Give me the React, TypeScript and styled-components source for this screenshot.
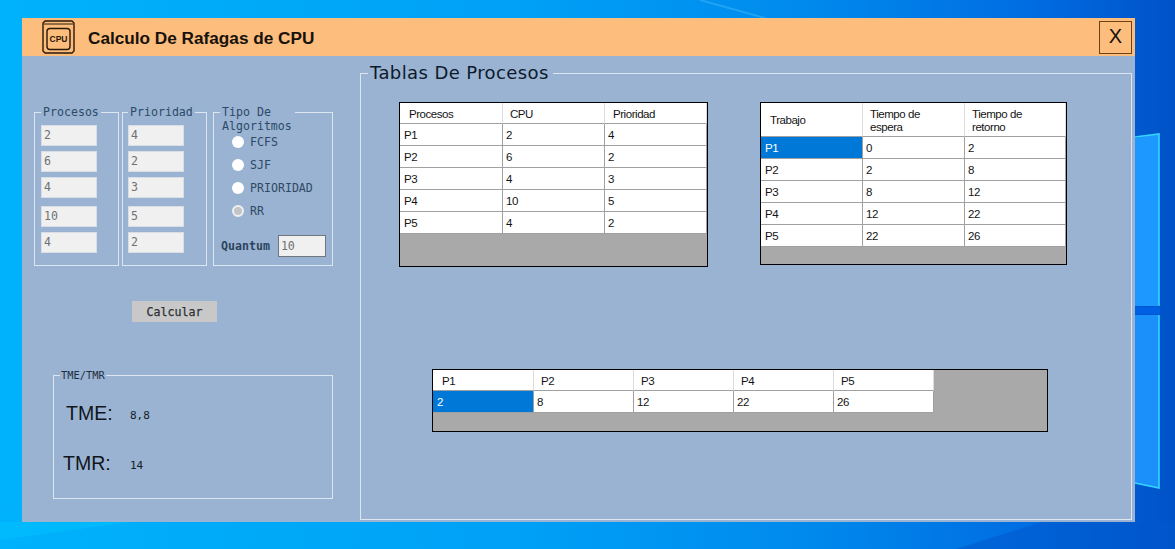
import React from "react";
import styled, { createGlobalStyle } from "styled-components";

const Global = createGlobalStyle`
  html, body { margin: 0; padding: 0; }
  body { font-family: "DejaVu Sans Mono", monospace; overflow: hidden; }
`;

const Desktop = styled.div`
  position: relative;
  width: 1175px;
  height: 549px;
  box-sizing: border-box;
  padding: 18px 40px 27px 22px;
  overflow: hidden;
  background: linear-gradient(90deg, #00b2fb 0%, #00a0f6 45%, #0088ec 70%, #006ce2 88%, #0052c8 100%);
`;

const Wallpaper = styled.svg`
  position: absolute;
  left: 0;
  top: 0;
`;

const Window = styled.div`
  position: relative;
  width: 1113px;
  height: 504px;
  display: flex;
  flex-direction: column;
  background: #9ab3d2;
`;

const TitleBar = styled.header`
  height: 38px;
  display: flex;
  align-items: center;
  padding: 0 3px 0 20px;
  background: #fdbd7c;
`;

const AppIcon = styled.svg`
  flex: none;
`;

const Title = styled.h1`
  flex: 1;
  margin: 0 0 0 13px;
  padding-top: 2px;
  font: bold 17.2px "Liberation Sans", Arial, sans-serif;
  color: #17120c;
`;

const CloseButton = styled.button`
  width: 33px;
  height: 33px;
  padding: 0 0 1px;
  border: 1px solid #6e4214;
  background: transparent;
  color: #14100c;
  font: 20px "Liberation Sans", Arial, sans-serif;
`;

const Content = styled.main`
  flex: 1;
  display: flex;
  min-height: 0;
`;

const LeftColumn = styled.section`
  width: 338px;
  flex: none;
  box-sizing: border-box;
  padding: 49px 0 0 12px;
`;

const GroupsRow = styled.div`
  display: flex;
  height: 161px;
`;

const Group = styled.fieldset<{ $width: number; $pad?: number; $left?: number }>`
  box-sizing: border-box;
  width: ${(p) => p.$width}px;
  min-width: 0;
  height: 100%;
  margin: 0 0 0 ${(p) => p.$left ?? 0}px;
  padding: 0 ${(p) => p.$pad ?? 6}px;
  border: 1px solid #dbe6f0;
`;

const GroupLegend = styled.legend<{ $width?: number }>`
  box-sizing: border-box;
  height: 14px;
  ${(p) => (p.$width ? `width: ${p.$width}px;` : "")}
  padding: 0 2px;
  font-size: 11.6px;
  line-height: 14px;
  color: #2c4a68;
`;

const FieldStack = styled.div`
  display: flex;
  flex-direction: column;
  padding-top: 6px;
`;

const Field = styled.div<{ $extra?: boolean }>`
  box-sizing: border-box;
  width: 56px;
  height: 21px;
  margin-top: ${(p) => (p.$extra ? 3 : 0)}px;
  margin-bottom: 5px;
  padding-left: 2px;
  border: 1px solid #d9dee4;
  background: #f0f0f0;
  font-size: 11.6px;
  line-height: 19px;
  color: #6f7173;
`;

const RadioList = styled.div`
  display: flex;
  flex-direction: column;
  padding: 11px 0 0 12px;
`;

const RadioRow = styled.label`
  height: 23px;
  display: flex;
  align-items: center;
  gap: 6px;
  font-size: 11.6px;
  color: #2f4a66;
`;

const RadioDot = styled.span<{ $off?: boolean }>`
  box-sizing: border-box;
  width: 12px;
  height: 12px;
  border-radius: 50%;
  background: ${(p) => (p.$off ? "#c3c5c9" : "#ffffff")};
  border: ${(p) => (p.$off ? "2px solid #eef0f2" : "none")};
`;

const QuantumRow = styled.div`
  display: flex;
  align-items: center;
  margin: 13px 0 0 1px;
`;

const QuantumLabel = styled.span`
  width: 58px;
  font-size: 11.6px;
  font-weight: bold;
  color: #2c4460;
`;

const QuantumField = styled.div`
  box-sizing: border-box;
  width: 49px;
  height: 22px;
  padding-left: 2px;
  border: 1px solid #6f767e;
  background: #f0f0f0;
  font-size: 11.6px;
  line-height: 21px;
  color: #6f7173;
`;

const CalcButton = styled.button`
  display: block;
  width: 85px;
  height: 21px;
  margin: 35px 0 0 98px;
  padding: 0;
  border: none;
  background: #c8c8c8;
  font: 11.6px "DejaVu Sans Mono", monospace;
  -webkit-text-stroke: 0.25px #2c3034;
  color: #2c3034;
`;

const TimesGroup = styled.fieldset`
  box-sizing: border-box;
  width: 280px;
  height: 131px;
  margin: 46px 0 0 19px;
  padding: 0;
  min-width: 0;
  border: 1px solid #dbe6f0;
`;

const TimesLegend = styled.legend`
  height: 14px;
  margin-left: 6px;
  padding: 0 1px;
  font-size: 10.4px;
  line-height: 14px;
  color: #1e2e3e;
`;

const TimeRow = styled.div<{ $indent: number; $top: number }>`
  display: grid;
  grid-template-columns: 76px auto;
  align-items: center;
  height: 26px;
  margin-top: ${(p) => p.$top}px;
  padding-left: ${(p) => p.$indent}px;
`;

const TimeLabel = styled.span<{ $indent: number }>`
  margin-right: ${(p) => -p.$indent}px;
  font: 19.5px "Liberation Sans", Arial, sans-serif;
  color: #10161c;
`;

const TimeValue = styled.span<{ $indent: number }>`
  margin-left: ${(p) => -p.$indent}px;
  padding-top: 5px;
  font-size: 11px;
  color: #141c24;
`;

const TablesGroup = styled.fieldset`
  box-sizing: border-box;
  width: 772px;
  height: 460px;
  margin: 4px 0 0 0;
  padding: 16px 0 0 0;
  min-width: 0;
  border: 1px solid #dbe6f0;
`;

const TablesLegend = styled.legend`
  height: 26px;
  margin-left: 7px;
  padding: 0 4px 0 2px;
  font: 18px "DejaVu Sans", sans-serif;
  letter-spacing: 0.4px;
  line-height: 26px;
  color: #0c1a2a;
`;

const TopTables = styled.div`
  display: flex;
  align-items: flex-start;
  gap: 52px;
  margin-left: 38px;
`;

const Grid = styled.div<{ $w: number; $h: number; $left?: number; $top?: number }>`
  box-sizing: border-box;
  width: ${(p) => p.$w}px;
  height: ${(p) => p.$h}px;
  margin: ${(p) => p.$top ?? 0}px 0 0 ${(p) => p.$left ?? 0}px;
  border: 1px solid #000;
  background: #a9a9a9;
  overflow: hidden;
`;

const DataTable = styled.table`
  table-layout: fixed;
  border-collapse: separate;
  border-spacing: 0;
  font: 11.5px "Liberation Sans", Arial, sans-serif;
  letter-spacing: -0.45px;
  color: #141414;
`;

const HeadCell = styled.th<{ $w: number; $h: number; $pad: number }>`
  box-sizing: border-box;
  width: ${(p) => p.$w}px;
  height: ${(p) => p.$h}px;
  padding: 2px 2px 0 ${(p) => p.$pad}px;
  background: #fff;
  border-right: 1px solid #dcdcdc;
  border-bottom: 1px solid #a0a0a0;
  font-weight: normal;
  text-align: left;
  line-height: 13px;
`;

const BodyCell = styled.td<{ $selected?: boolean }>`
  box-sizing: border-box;
  height: 22px;
  padding: 0 0 0 3px;
  background: ${(p) => (p.$selected ? "#0078d7" : "#fff")};
  color: ${(p) => (p.$selected ? "#fff" : "#141414")};
  border-right: 1px solid #a0a0a0;
  border-bottom: 1px solid #a0a0a0;
  &:first-child {
    padding-left: 4px;
  }
`;

type TableDef = {
  head: React.ReactNode[];
  widths: number[];
  pads: number[];
  headH: number;
  rows: string[][];
  selected?: boolean;
};

const DataGrid = ({ head, widths, pads, headH, rows, selected }: TableDef) => (
  <DataTable>
    <thead>
      <tr>
        {head.map((h, i) => (
          <HeadCell key={i} $w={widths[i]} $h={headH} $pad={pads[i]}>
            {h}
          </HeadCell>
        ))}
      </tr>
    </thead>
    <tbody>
      {rows.map((row, r) => (
        <tr key={r}>
          {row.map((c, i) => (
            <BodyCell key={i} $selected={selected && r === 0 && i === 0}>
              {c}
            </BodyCell>
          ))}
        </tr>
      ))}
    </tbody>
  </DataTable>
);

const procesos = ["2", "6", "4", "10", "4"];
const prioridad = ["4", "2", "3", "5", "2"];
const algoritmos = ["FCFS", "SJF", "PRIORIDAD", "RR"];

export default function App() {
  return (
    <>
      <Global />
      <Desktop>
        <Wallpaper width="1175" height="549" viewBox="0 0 1175 549">
          <path d="M700 0 L765 18" stroke="#2aa8f4" strokeWidth="2" opacity="0.8" />
          <path d="M1042 522 H1175 V549 H956 Z" fill="#0058cc" opacity="0.55" />
          <path d="M0 540 L130 522 H0 Z" fill="#00c0ff" opacity="0.6" />
          <path d="M1135 138 L1159 134 V306 H1135 Z" fill="#1d98ff" />
          <path d="M1135 137 L1159 134 V306" fill="none" stroke="#34d4ff" strokeWidth="1.6" />
          <path d="M1135 307 H1160 V314 H1135 Z" fill="#0060e4" />
          <path d="M1135 315 H1159 V488 L1135 483 Z" fill="#1b90fb" />
          <path d="M1159 315 V488 L1135 483" fill="none" stroke="#34d4ff" strokeWidth="1.6" />
        </Wallpaper>
        <Window>
          <TitleBar>
            <AppIcon width="33" height="34" viewBox="0 0 33 34">
              <path d="M3 1 H30 L32 3 V31 L30 33 H3 L1 31 V3 Z" fill="none" stroke="#2a1808" strokeWidth="1.4" />
              <path d="M2 4 H31" stroke="#2a1808" strokeWidth="1" />
              <rect x="5" y="8.5" width="23" height="21" rx="3" fill="none" stroke="#2a1808" strokeWidth="1.4" />
              <text x="16.5" y="22" textAnchor="middle" fontFamily="Liberation Sans, sans-serif" fontWeight="bold" fontSize="8.5" fill="#2a1808">
                CPU
              </text>
            </AppIcon>
            <Title>Calculo De Rafagas de CPU</Title>
            <CloseButton>X</CloseButton>
          </TitleBar>
          <Content>
            <LeftColumn>
              <GroupsRow>
                <Group $width={85}>
                  <GroupLegend>Procesos</GroupLegend>
                  <FieldStack>
                    {procesos.map((v, i) => (
                      <Field key={i} $extra={i === 3}>{v}</Field>
                    ))}
                  </FieldStack>
                </Group>
                <Group $width={85} $left={3} $pad={5}>
                  <GroupLegend>Prioridad</GroupLegend>
                  <FieldStack>
                    {prioridad.map((v, i) => (
                      <Field key={i} $extra={i === 3}>{v}</Field>
                    ))}
                  </FieldStack>
                </Group>
                <Group $width={120} $left={6}>
                  <GroupLegend $width={75}>Tipo De Algoritmos</GroupLegend>
                  <RadioList>
                    {algoritmos.map((a) => (
                      <RadioRow key={a}>
                        <RadioDot $off={a === "RR"} />
                        {a}
                      </RadioRow>
                    ))}
                  </RadioList>
                  <QuantumRow>
                    <QuantumLabel>Quantum</QuantumLabel>
                    <QuantumField>10</QuantumField>
                  </QuantumRow>
                </Group>
              </GroupsRow>
              <CalcButton>Calcular</CalcButton>
              <TimesGroup>
                <TimesLegend>TME/TMR</TimesLegend>
                <TimeRow $indent={12} $top={18}>
                  <TimeLabel $indent={12}>TME:</TimeLabel>
                  <TimeValue $indent={12}>8,8</TimeValue>
                </TimeRow>
                <TimeRow $indent={9} $top={24}>
                  <TimeLabel $indent={9}>TMR:</TimeLabel>
                  <TimeValue $indent={9}>14</TimeValue>
                </TimeRow>
              </TimesGroup>
            </LeftColumn>
            <TablesGroup>
              <TablesLegend>Tablas De Procesos</TablesLegend>
              <TopTables>
                <Grid $w={309} $h={165}>
                  <DataGrid
                    head={["Procesos", "CPU", "Prioridad"]}
                    widths={[103, 102, 102]}
                    pads={[9, 7, 8]}
                    headH={21}
                    rows={[
                      ["P1", "2", "4"],
                      ["P2", "6", "2"],
                      ["P3", "4", "3"],
                      ["P4", "10", "5"],
                      ["P5", "4", "2"],
                    ]}
                  />
                </Grid>
                <Grid $w={307} $h={163}>
                  <DataGrid
                    head={["Trabajo", <>Tiempo de<br />espera</>, <>Tiempo de<br />retorno</>]}
                    widths={[102, 102, 101]}
                    pads={[9, 7, 7]}
                    headH={34}
                    selected
                    rows={[
                      ["P1", "0", "2"],
                      ["P2", "2", "8"],
                      ["P3", "8", "12"],
                      ["P4", "12", "22"],
                      ["P5", "22", "26"],
                    ]}
                  />
                </Grid>
              </TopTables>
              <Grid $w={616} $h={63} $left={71} $top={102}>
                <DataGrid
                  head={["P1", "P2", "P3", "P4", "P5"]}
                  widths={[101, 100, 100, 100, 100]}
                  pads={[9, 7, 7, 7, 7]}
                  headH={21}
                  selected
                  rows={[["2", "8", "12", "22", "26"]]}
                />
              </Grid>
            </TablesGroup>
          </Content>
        </Window>
      </Desktop>
    </>
  );
}
